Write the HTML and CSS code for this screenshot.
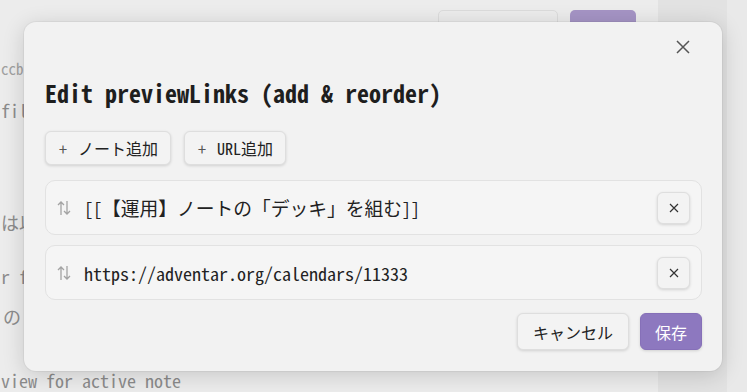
FILE: index.html
```html
<!DOCTYPE html>
<html lang="ja">
<head>
<meta charset="utf-8">
<title>Edit previewLinks</title>
<link rel="stylesheet" href="styles.css">
</head>
<body>
<div class="app">
  <div class="main">
    <div class="toolbar">
      <span class="tb-btn tb-ghost"></span>
      <span class="tb-btn tb-primary"></span>
    </div>
    <div class="doc">
      <div class="code">ccb</div>
      <div class="ln ln-fil">fil</div>
      <div class="ln ln-ha">は以</div>
      <div class="ln ln-rf">r f</div>
      <div class="ln ln-no">の</div>
      <div class="ln ln-view">view for active note</div>
    </div>
  </div>
  <div class="sidebar"></div>
  <div class="edge"></div>
</div>

<div class="modal">
  <button class="close" aria-label="close">
    <svg width="14" height="14" viewBox="0 0 14 14"><path d="M1 1L13 13M13 1L1 13" stroke="#555" stroke-width="1.5" fill="none"/></svg>
  </button>
  <h1 class="title">Edit previewLinks (add &amp; reorder)</h1>
  <div class="adds">
    <button class="btn add"><span class="plus">+</span>ノート追加</button>
    <button class="btn add"><span class="plus">+</span>URL追加</button>
  </div>
  <div class="list">
    <div class="row">
      <svg class="drag" width="14" height="16" viewBox="0 0 14 16"><path d="M4 15V2M1 5L4 2L7 5M10 1V14M7 11L10 14L13 11" stroke="#a3a3a3" stroke-width="1.3" fill="none"/></svg>
      <span class="val">[[<span class="cjk">【運用】ノートの「デッキ」を組む</span>]]</span>
      <button class="btn rm"><svg width="10" height="10" viewBox="0 0 10 10"><path d="M1 1L9 9M9 1L1 9" stroke="#333" stroke-width="1.2" fill="none"/></svg></button>
    </div>
    <div class="row">
      <svg class="drag" width="14" height="16" viewBox="0 0 14 16"><path d="M4 15V2M1 5L4 2L7 5M10 1V14M7 11L10 14L13 11" stroke="#a3a3a3" stroke-width="1.3" fill="none"/></svg>
      <span class="val">https://adventar.org/calendars/11333</span>
      <button class="btn rm"><svg width="10" height="10" viewBox="0 0 10 10"><path d="M1 1L9 9M9 1L1 9" stroke="#333" stroke-width="1.2" fill="none"/></svg></button>
    </div>
  </div>
  <div class="footer">
    <button class="btn cancel">キャンセル</button>
    <button class="btn save">保存</button>
  </div>
</div>
</body>
</html>
```

FILE: styles.css
```css
* { box-sizing: border-box; }
html, body {
  margin: 0;
  padding: 0;
  width: 747px;
  height: 392px;
  overflow: hidden;
  background: #e9e9e9;
  font-family: "Noto Sans Mono CJK JP", "DejaVu Sans Mono", "Noto Sans CJK JP", monospace;
  color: #222;
}
.app {
  display: flex;
  height: 392px;
}
.main {
  width: 658px;
  background: #ececec;
  display: flex;
  flex-direction: column;
}
.toolbar {
  display: flex;
  gap: 12px;
  padding: 10px 0 0 438px;
  height: 40px;
}
.tb-btn {
  display: block;
  height: 30px;
  border-radius: 5px;
}
.tb-ghost {
  width: 120px;
  background: #ececec;
  border: 1px solid #dcdcdc;
}
.tb-primary {
  width: 66px;
  background: #a594c5;
}
.doc {
  display: flex;
  flex-direction: column;
  font-size: 18px;
  color: #8b8b8b;
  line-height: 20px;
  padding-left: 1px;
}
.code {
  margin-top: 20px;
  line-height: 18px;
  font-size: 15px;
  color: #a0a0a0;
  white-space: nowrap;
}
.ln { white-space: nowrap; }
.ln-fil { margin-top: 22px; }
.ln-ha { margin-top: 92px; }
.ln-rf { margin-top: 34px; }
.ln-no { margin-top: 20px; margin-left: 2px; }
.ln-view { margin-top: 44px; }
.sidebar {
  width: 69px;
  background: #e2e2e2;
}
.edge {
  flex: 1;
  background: #e9e9e9;
}

.modal {
  position: absolute;
  left: 24px;
  top: 22px;
  width: 698px;
  height: 349px;
  background: #f2f2f2;
  border-radius: 12px;
  box-shadow: 0 4px 22px rgba(0,0,0,0.16), 0 0 0 1px rgba(0,0,0,0.04);
  padding: 20px 20px 20px 21px;
  display: flex;
  flex-direction: column;
}
.close {
  position: absolute;
  top: 18px;
  right: 32px;
  width: 14px;
  height: 14px;
  padding: 0;
  border: 0;
  background: none;
  display: flex;
}
.title {
  margin: 36px 0 0 0;
  font-size: 24px;
  line-height: 30px;
  font-weight: 600;
  color: #1e1e1e;
  white-space: nowrap;
}
.btn {
  font-family: inherit;
  font-size: 16px;
  color: #222;
  background: #f3f3f3;
  border: 1px solid #dedede;
  border-radius: 6px;
  box-shadow: 0 1px 3px rgba(0,0,0,0.14);
  display: flex;
  align-items: center;
  justify-content: center;
  padding: 0;
  cursor: pointer;
}
.adds {
  display: flex;
  gap: 13px;
  margin-top: 23px;
}
.add {
  height: 34px;
  padding: 0 12px;
}
.plus {
  color: #555;
  width: 10px;
  margin-right: 10px;
  text-align: center;
}
.list {
  display: flex;
  flex-direction: column;
  gap: 10px;
  margin-top: 15px;
}
.row {
  height: 55px;
  border: 1px solid #e2e2e2;
  background: #f5f5f5;
  border-radius: 10px;
  display: flex;
  align-items: center;
  padding: 0 11px 0 11px;
}
.drag { flex: none; margin-right: 13px; }
.val {
  flex: 1;
  font-size: 18px;
  white-space: nowrap;
  color: #222;
  text-spacing-trim: space-all;
}
.cjk {
  font-size: 18.75px;
}
.rm {
  width: 33px;
  height: 32px;
  flex: none;
}
.footer {
  display: flex;
  justify-content: flex-end;
  gap: 11px;
  margin-top: 13px;
}
.cancel {
  height: 37px;
  padding: 0 15px;
  font-family: "Noto Sans CJK JP", sans-serif;
}
.save {
  height: 37px;
  width: 62px;
  background: #8d78bf;
  border-color: #8670b8;
  color: #fff;
  font-family: "Noto Sans CJK JP", sans-serif;
}
```
